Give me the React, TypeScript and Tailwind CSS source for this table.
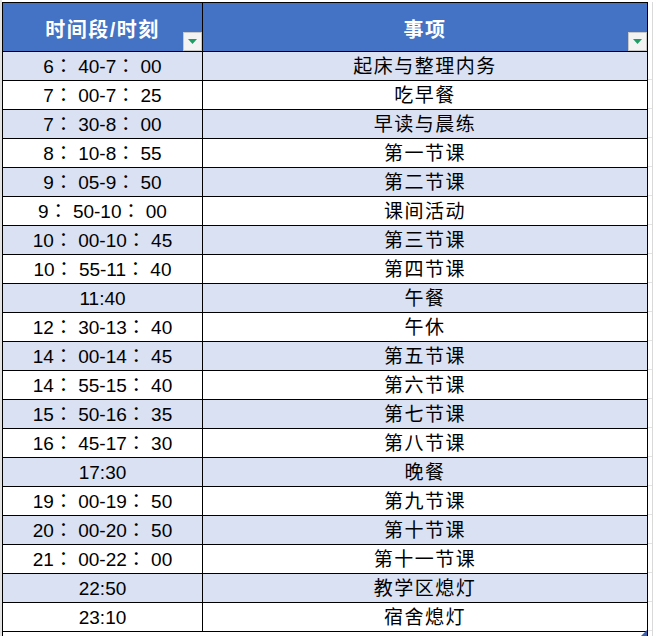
import React from 'react'

const rows: [string, string][] = [
  ['6： 40-7： 00', '起床与整理内务'],
  ['7： 00-7： 25', '吃早餐'],
  ['7： 30-8： 00', '早读与晨练'],
  ['8： 10-8： 55', '第一节课'],
  ['9： 05-9： 50', '第二节课'],
  ['9： 50-10： 00', '课间活动'],
  ['10： 00-10： 45', '第三节课'],
  ['10： 55-11： 40', '第四节课'],
  ['11:40', '午餐'],
  ['12： 30-13： 40', '午休'],
  ['14： 00-14： 45', '第五节课'],
  ['14： 55-15： 40', '第六节课'],
  ['15： 50-16： 35', '第七节课'],
  ['16： 45-17： 30', '第八节课'],
  ['17:30', '晚餐'],
  ['19： 00-19： 50', '第九节课'],
  ['20： 00-20： 50', '第十节课'],
  ['21： 00-22： 00', '第十一节课'],
  ['22:50', '教学区熄灯'],
  ['23:10', '宿舍熄灯'],
]

const font = "font-['Liberation_Sans','Noto_Sans_CJK_SC',sans-serif]"
const timeFont = "font-['Liberation_Sans','Noto_Sans_CJK_TC',sans-serif]"

function FilterBtn() {
  return (
    <div className="absolute right-0 bottom-0 w-[19px] h-[19px] bg-[#f3f3f3] border border-[#c8c8c8] flex items-center justify-center">
      <svg width="9" height="5" viewBox="0 0 9 5">
        <polygon points="0,0 9,0 4.5,5" fill="#1f9d64" />
      </svg>
    </div>
  )
}

export default function App() {
  return (
    <div className={`w-[653px] h-[636px] bg-white flex overflow-hidden ${font}`}>
      <div className="w-[2px] h-full bg-[#e3e3e3]" />
      <div className="pt-[2px] flex">
        <div className="relative w-[646px] border-t border-l border-r border-black">
          {/* 表头 */}
          <div className="flex h-[49px] bg-[#4472c4] border-b border-black">
            <div className="relative w-[200px] border-r border-black flex items-center justify-center pt-[6px] text-white text-[20px] font-bold tracking-[1.5px]">
              时间段/时刻
              <FilterBtn />
            </div>
            <div className="relative flex-1 flex items-center justify-center pt-[6px] text-white text-[20px] font-bold tracking-[1.5px]">
              事项
              <FilterBtn />
            </div>
          </div>
          {rows.map(([time, item], i) => (
            <div
              key={i}
              className={`flex h-[29px] border-b border-black text-[19px] text-black ${i % 2 === 0 ? 'bg-[#d9e1f2]' : 'bg-white'}`}
            >
              <div className={`w-[200px] border-r border-black flex items-center justify-center pt-[3px] whitespace-pre ${timeFont}`}>
                {time}
              </div>
              <div className="flex-1 flex items-center justify-center pt-[2px] tracking-[1.5px]">{item}</div>
            </div>
          ))}
          <svg className="absolute right-0 bottom-0" width="6" height="6" viewBox="0 0 6 6">
            <polygon points="6,0 6,6 0,6" fill="#3c5fb0" />
          </svg>
        </div>
        <div className="w-[5px] pt-[49px] border-r border-[#d9d9d9]">
          {rows.map((_, i) => (
            <div key={i} className="h-[29px] border-b border-[#e3e3e3]" />
          ))}
        </div>
      </div>
    </div>
  )
}
